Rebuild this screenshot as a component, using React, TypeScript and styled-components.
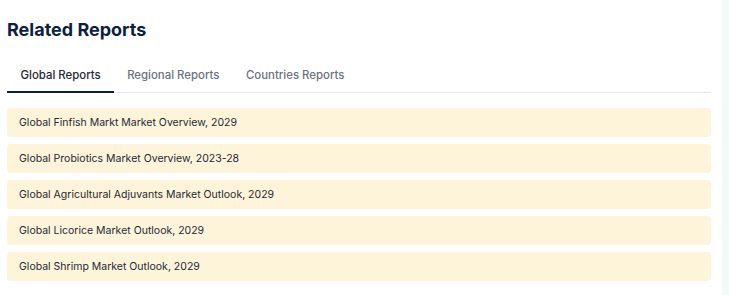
import { createGlobalStyle, styled } from "styled-components"

const Global = createGlobalStyle`
  body {
    margin: 0;
    background: #ffffff;
    font-family: Inter, "Liberation Sans", sans-serif;
  }
`

const Page = styled.div`
  display: flex;
  min-height: 295px;
`

const Main = styled.main`
  width: 722px;
  box-sizing: border-box;
  padding: 18px 11px 0 7px;
`

const Aside = styled.aside`
  flex: 1;
  background-color: #f1fbf8;
`

const Title = styled.h2`
  margin: 0;
  font-size: 18px;
  font-weight: 700;
  line-height: 24px;
  color: #0c1f3f;
`

const Tabs = styled.div`
  display: flex;
  margin-top: 17px;
  border-bottom: 1px solid #e5e7eb;
`

const Tab = styled.button<{ $active?: boolean }>`
  border: 0;
  background: none;
  font-family: inherit;
  font-size: 11.4px;
  font-weight: 500;
  padding: 0 13px 0 13.5px;
  height: 34px;
  color: ${(p) => (p.$active ? "#1f2937" : "#6b7280")};
  border-bottom: 2px solid ${(p) => (p.$active ? "#0c1f3f" : "transparent")};
  margin-bottom: -1px;
  cursor: pointer;
`

const List = styled.ul`
  list-style: none;
  margin: 15px 0 0;
  padding: 0;
  display: flex;
  flex-direction: column;
  gap: 7px;
`

const Item = styled.li`
  height: 29px;
  display: flex;
  align-items: center;
  padding: 0 12px;
  border-radius: 4px;
  background-color: #fef4d9;
  font-size: 10.5px;
  color: #1f2937;
`

const reports = [
  "Global Finfish Markt Market Overview, 2029",
  "Global Probiotics Market Overview, 2023-28",
  "Global Agricultural Adjuvants Market Outlook, 2029",
  "Global Licorice Market Outlook, 2029",
  "Global Shrimp Market Outlook, 2029",
]

export default function App() {
  return (
    <>
      <Global />
      <Page>
        <Main>
          <Title>Related Reports</Title>
          <Tabs>
            <Tab $active>Global Reports</Tab>
            <Tab>Regional Reports</Tab>
            <Tab>Countries Reports</Tab>
          </Tabs>
          <List>
            {reports.map((r) => (
              <Item key={r}>{r}</Item>
            ))}
          </List>
        </Main>
        <Aside />
      </Page>
    </>
  )
}
